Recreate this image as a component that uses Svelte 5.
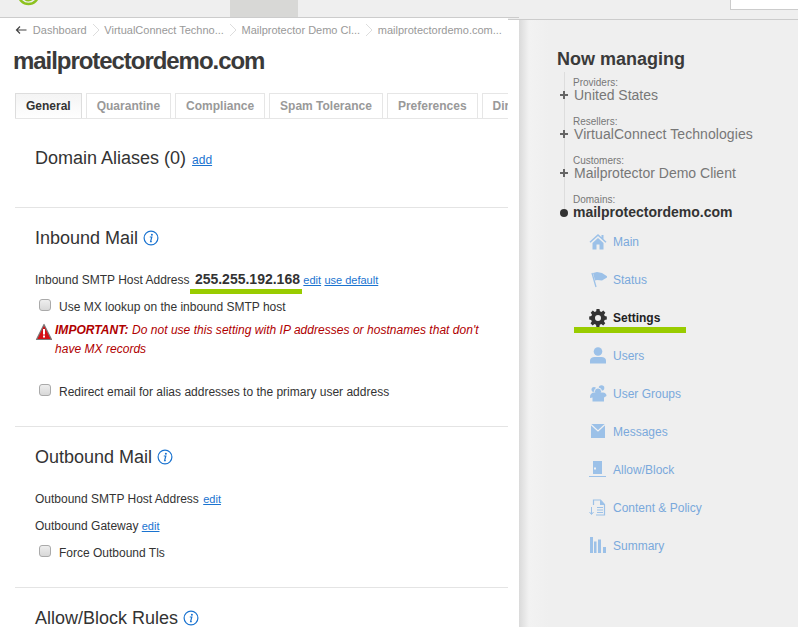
<script>
  const crumbs = ['Dashboard', 'VirtualConnect Techno...', 'Mailprotector Demo Cl...', 'mailprotectordemo.com...'];
  const tabs = ['General', 'Quarantine', 'Compliance', 'Spam Tolerance', 'Preferences', 'Dir'];
  const path = [
    { label: 'Providers:', name: 'United States' },
    { label: 'Resellers:', name: 'VirtualConnect Technologies', wide: true },
    { label: 'Customers:', name: 'Mailprotector Demo Client' }
  ];
  const nav = ['Main', 'Status', 'Settings', 'Users', 'User Groups', 'Messages', 'Allow/Block', 'Content & Policy', 'Summary'];
</script>

{#snippet info()}
  <svg class="info" width="16" height="16" viewBox="0 0 16 16">
    <circle cx="8" cy="8" r="6.9" fill="#fff" stroke="#1a73d0" stroke-width="1.2" />
    <circle cx="8.9" cy="4.7" r="1" fill="#1a73d0" />
    <path d="M6.8 7h2l-1.2 4.6h1.2" fill="none" stroke="#1a73d0" stroke-width="1.2" />
  </svg>
{/snippet}

{#snippet navIcon(name)}
  <svg class="nav-icon" width="18" height="18" viewBox="0 0 18 18">
    {#if name === 'Main'}
      <path d="M9 1 .5 8.800l1 1L9 3l7.500 6.800 1-1-3-2.800V2h-2v2.200Z M3.500 10 9 5l5.500 5v6.500h-4v-5h-3v5h-4Z" fill="#9cc1e8" />
    {:else if name === 'Status'}
      <path d="M3 2l4 14" stroke="#9cc1e8" stroke-width="1.300" fill="none" />
      <path d="M4 2 8 1l5 1 6 4-6 3.500-5-.5-2 .5Z" fill="#9cc1e8" />
    {:else if name === 'Settings'}
      <path fill-rule="evenodd" d="M7.500 1h3l.4 2.200 1.500.6 1.900-1.300 2.100 2.100-1.300 1.900.6 1.500L17.800 8.400v3l-2.200.4-.6 1.500 1.300 1.900-2.100 2.100-1.900-1.300-1.500.6-.4 2.200h-3l-.4-2.200-1.500-.6-1.900 1.300-2.100-2.100 1.300-1.900-.6-1.500L.2 11.400v-3l2.200-.4.6-1.500L1.700 4.600l2.100-2.100 1.900 1.300 1.500-.6ZM9 6.900a3 3 0 1 0 0 6 3 3 0 0 0 0-6Z" fill="#333" transform="translate(0 -.9)" />
    {:else if name === 'Users'}
      <circle cx="9" cy="4.500" r="4.300" fill="#9cc1e8" />
      <path d="M1 16.500v-3c0-2 2-3.500 4.500-3.500h7c2.500 0 4.500 1.500 4.500 3.500v3Z" fill="#9cc1e8" />
    {:else if name === 'User Groups'}
      <circle cx="12.500" cy="3" r="2.800" fill="#9cc1e8" />
      <circle cx="5" cy="4.500" r="2.500" fill="#9cc1e8" />
      <circle cx="9" cy="6.500" r="3.600" fill="#9cc1e8" stroke="#f2f2f2" />
      <path d="M1 12c0-3 2-4.500 4-4.500l9 0c2 0 3.500 1.500 3.500 3.500l-2.500 1.500v4H3.500v-4L1 13Z" fill="#9cc1e8" />
    {:else if name === 'Messages'}
      <rect x="2" y="1" width="14" height="14" fill="#9cc1e8" />
      <path d="M2 1.500 9 8l7-6.500" fill="none" stroke="#f2f2f2" stroke-width="1.200" />
    {:else if name === 'Allow/Block'}
      <path d="M4 0h9v13H4Z" fill="#9cc1e8" />
      <rect x="5" y="6.500" width="2" height="2" fill="#f2f2f2" />
      <rect x="0" y="15" width="17" height="1" fill="#9cc1e8" />
    {:else if name === 'Content & Policy'}
      <path d="M4.500 6V1h7l4 4.500V16H7" fill="none" stroke="#9cc1e8" stroke-width="1.200" />
      <path d="M11 1v5h5" fill="#9cc1e8" />
      <path d="M8 8.500h6M8 11h6M8 13.500h6" stroke="#9cc1e8" stroke-width="1.200" />
      <path d="M2.500 8v7M.5 13l2 2.500 2-2.500" fill="none" stroke="#9cc1e8" stroke-width="1" />
    {:else}
      <path d="M1 0h3v16H1ZM5 4.500h2.500V16H5ZM9 2.500h3V16H9ZM14 10h3v6h-3Z" fill="#9cc1e8" />
    {/if}
  </svg>
{/snippet}

{#snippet check(text)}
  <div class="check"><span class="box"></span><span>{text}</span></div>
{/snippet}

<div class="page">
  <header class="top">
    <svg class="logo" width="23" height="6" viewBox="0 0 23 6">
      <path d="M1.500 -6a10 10 0 0 0 20 0" fill="none" stroke="#8dc21f" stroke-width="2.500" />
      <path d="M6 -5a5.500 5.500 0 0 0 11 0" fill="none" stroke="#8dc21f" stroke-width="2" />
    </svg>
    <div class="toptab"></div>
    <div class="search"></div>
  </header>

  <div class="columns">
    <main class="content">
      <nav class="crumbs">
        <svg width="12" height="10" viewBox="0 0 12 10"><path d="M11.500 5H1.500M5 1.500 1.500 5 5 8.500" fill="none" stroke="#444" stroke-width="1.200" /></svg>
        {#each crumbs as crumb, i}
          {#if i > 0}
            <svg class="sep" width="8" height="14" viewBox="0 0 8 14"><path d="M1 1l6 6-6 6" fill="none" stroke="#ddd" /></svg>
          {/if}
          <span>{crumb}</span>
        {/each}
      </nav>

      <h1>mailprotectordemo.com</h1>

      <ul class="tabs">
        {#each tabs as tab, i}
          <li class:active={i === 0}>{tab}</li>
        {/each}
      </ul>

      <section class="aliases">
        <h2>Domain Aliases (0) <a href="#aliases">add</a></h2>
      </section>

      <section class="inbound">
        <h2>Inbound Mail {@render info()}</h2>
        <div class="row host">
          Inbound SMTP Host Address <span class="ip">255.255.192.168</span> <a href="#edit">edit</a> <a href="#default">use default</a>
        </div>
        {@render check('Use MX lookup on the inbound SMTP host')}
        <div class="warn">
          <svg width="18" height="18" viewBox="0 0 18 18">
            <path d="M9 1.500 1.500 16.500h15Z" fill="#d40f14" stroke="#7b7b7b" stroke-width="1.200" stroke-linejoin="round" />
            <path d="M9 6v5.500" stroke="#fff" stroke-width="2" />
            <rect x="8" y="12.500" width="2" height="2" fill="#fff" />
          </svg>
          <p><b>IMPORTANT:</b> Do not use this setting with IP addresses or hostnames that don't have MX records</p>
        </div>
        <div class="spaced">{@render check('Redirect email for alias addresses to the primary user address')}</div>
      </section>

      <section class="outbound">
        <h2>Outbound Mail {@render info()}</h2>
        <div class="row first">Outbound SMTP Host Address <a href="#edit">edit</a></div>
        <div class="row second">Outbound Gateway <a href="#edit">edit</a></div>
        {@render check('Force Outbound Tls')}
      </section>

      <section class="rules">
        <h2>Allow/Block Rules {@render info()}</h2>
      </section>
    </main>

    <aside class="side">
      <h3>Now managing</h3>
      <div class="tree">
        {#each path as item}
          <div class="node">
            <small>{item.label}</small>
            <div class="name" class:wide={item.wide}><span class="plus"></span>{item.name}</div>
          </div>
        {/each}
        <div class="node current">
          <small>Domains:</small>
          <div class="name"><span class="dot"></span>mailprotectordemo.com</div>
        </div>
      </div>
      <ul class="nav">
        {#each nav as item}
          <li class:on={item === 'Settings'}>{@render navIcon(item)}<span>{item}</span></li>
        {/each}
      </ul>
    </aside>
  </div>
</div>

<style>
  :global(body) {
    margin: 0;
    background: #fff;
  }

  .page {
    width: 798px;
    height: 627px;
    overflow: hidden;
    font-family: "Liberation Sans", Arial, sans-serif;
    color: #333;
    font-size: 12px;
  }

  .top {
    height: 19px;
    background: #efefef;
    display: flex;
    position: relative;
  }

  .logo {
    margin-left: 17px;
  }

  .toptab {
    width: 68px;
    height: 17px;
    margin-left: 190px;
    background: #d8d8d6;
  }

  .search {
    position: absolute;
    left: 730px;
    top: 0;
    width: 68px;
    height: 10px;
    background: #fff;
    border-left: 1px solid #ccc;
    border-bottom: 1px solid #ccc;
    box-sizing: border-box;
  }

  .columns {
    display: flex;
    height: 608px;
  }

  .content {
    position: relative;
    width: 493px;
    padding: 0 11px 0 15px;
    flex: none;
    background: #fff;
    border-top: 1px solid #ccc;
    overflow: hidden;
    margin-top: -2px;
  }

  /* the white sheet steps down 2px along its last few pixels */
  .content::after {
    content: '';
    position: absolute;
    right: 0;
    top: -1px;
    width: 11px;
    height: 2px;
    background: #efefef;
    border-bottom: 1px solid #ccc;
  }

  .crumbs {
    display: flex;
    align-items: center;
    gap: 4.85px;
    height: 24px;
    font-size: 11px;
    color: #999;
    white-space: nowrap;
  }

  .crumbs svg:first-child {
    margin-right: 1px;
  }

  h1 {
    margin: 5px 0 0 -2px;
    font-size: 24px;
    line-height: 28px;
    font-weight: bold;
    letter-spacing: -1.05px;
    color: #3a3a3a;
  }

  .tabs {
    list-style: none;
    margin: 18px 0 0;
    padding: 0;
    display: flex;
    gap: 4px;
    width: 493px;
    overflow: hidden;
    height: 26px;
    border-bottom: 1px solid #e6e6e6;
    box-sizing: border-box;
  }

  .tabs li {
    flex: none;
    border: 1px solid #e6e6e6;
    border-bottom: 0;
    padding: 0 10px;
    line-height: 25px;
    font-weight: bold;
    color: #999;
  }

  .tabs li.active {
    color: #333;
    background: linear-gradient(#f4f4f4, #fff);
    border-color: #ddd;
    margin-bottom: -1px;
    height: 26px;
  }

  section {
    width: 493px;
    border-bottom: 1px solid #e4e4e4;
    box-sizing: border-box;
    padding-left: 20px;
  }

  h2 {
    margin: 0;
    font-size: 18px;
    line-height: 24px;
    font-weight: normal;
    color: #333;
  }

  h2 a {
    font-size: 12px;
    margin-left: 1px;
  }

  a {
    color: #1a73d0;
    font-size: 11px;
    text-decoration: underline;
  }

  .info {
    vertical-align: -2px;
  }

  .aliases {
    height: 89px;
    padding-top: 27px;
  }

  .inbound {
    height: 219px;
    padding-top: 18px;
  }

  .row {
    line-height: 18px;
  }

  .host {
    margin-top: 20px;
    height: 28px;
  }

  .ip {
    font-size: 14px;
    font-weight: bold;
    border-bottom: 5px solid #99cc00;
    padding: 0 2px 2px 5px;
    margin-left: -4px;
    margin-right: -1px;
    position: relative;
    left: 1px;
  }

  .check {
    display: flex;
    align-items: center;
    gap: 8px;
    height: 18px;
    margin-left: 4px;
  }

  .box {
    width: 10px;
    height: 10px;
    border: 1px solid #aaa;
    border-radius: 3px;
    background: linear-gradient(#eee, #d8d8d8);
    margin-top: -5px;
  }

  .warn {
    display: flex;
    gap: 2px;
    margin-top: 5px;
  }

  .warn svg {
    flex: none;
    margin-top: 2px;
  }

  .warn p {
    margin: 0;
    font-style: italic;
    color: #b00000;
    line-height: 19px;
    width: 432px;
    letter-spacing: 0.03px;
  }

  .spaced {
    margin-top: 24px;
  }

  .outbound {
    height: 161px;
    padding-top: 18px;
  }

  .first {
    margin-top: 21px;
  }

  .first a {
    margin-left: 1px;
  }

  .second {
    margin-top: 9px;
    margin-bottom: 9px;
  }

  .rules {
    border: 0;
    padding-top: 18px;
  }

  .side {
    flex: 1;
    padding: 28px 0 0 38px;
    background: linear-gradient(90deg, #dadada, #f2f2f2 10px, #efefef 30px);
    border-top: 1px solid #ccc;
    color: #777;
  }

  h3 {
    margin: 0;
    font-size: 18px;
    line-height: 22px;
    color: #3a3a3a;
  }

  .tree {
    margin: 2px 0 0 7px;
    width: 215px;
    border-left: 1px solid #ddd;
    padding-top: 5px;
    height: 136px;
  }

  .node {
    height: 39px;
    padding-left: 8px;
  }

  small {
    display: block;
    font-size: 10px;
    line-height: 11px;
  }

  .name {
    font-size: 14px;
    line-height: 15px;
    position: relative;
    margin-left: 1px;
  }

  .name.wide {
    letter-spacing: 0.07px;
  }

  .plus {
    position: absolute;
    left: -14px;
    top: 3px;
    width: 8px;
    height: 8px;
    background:
      linear-gradient(#666, #666) center / 8px 2px no-repeat,
      linear-gradient(#666, #666) center / 2px 8px no-repeat;
  }

  .current .name {
    font-weight: bold;
    color: #333;
    margin-left: 0;
  }

  .dot {
    position: absolute;
    left: -13px;
    top: 4px;
    width: 8px;
    height: 8px;
    border-radius: 50%;
    background: #333;
  }

  .nav {
    list-style: none;
    margin: 10px 0 0;
    padding: 0 0 0 32px;
    width: 112px;
  }

  .nav li {
    height: 38px;
    display: flex;
    align-items: center;
    gap: 6px;
    color: #7aa9dc;
    white-space: nowrap;
    position: relative;
  }

  .nav li.on {
    color: #222;
    font-weight: bold;
  }

  .nav li.on::after {
    content: '';
    position: absolute;
    left: -15px;
    top: 28px;
    width: 112px;
    height: 6px;
    background: #99cc00;
  }

  .nav-icon {
    flex: none;
  }
</style>
